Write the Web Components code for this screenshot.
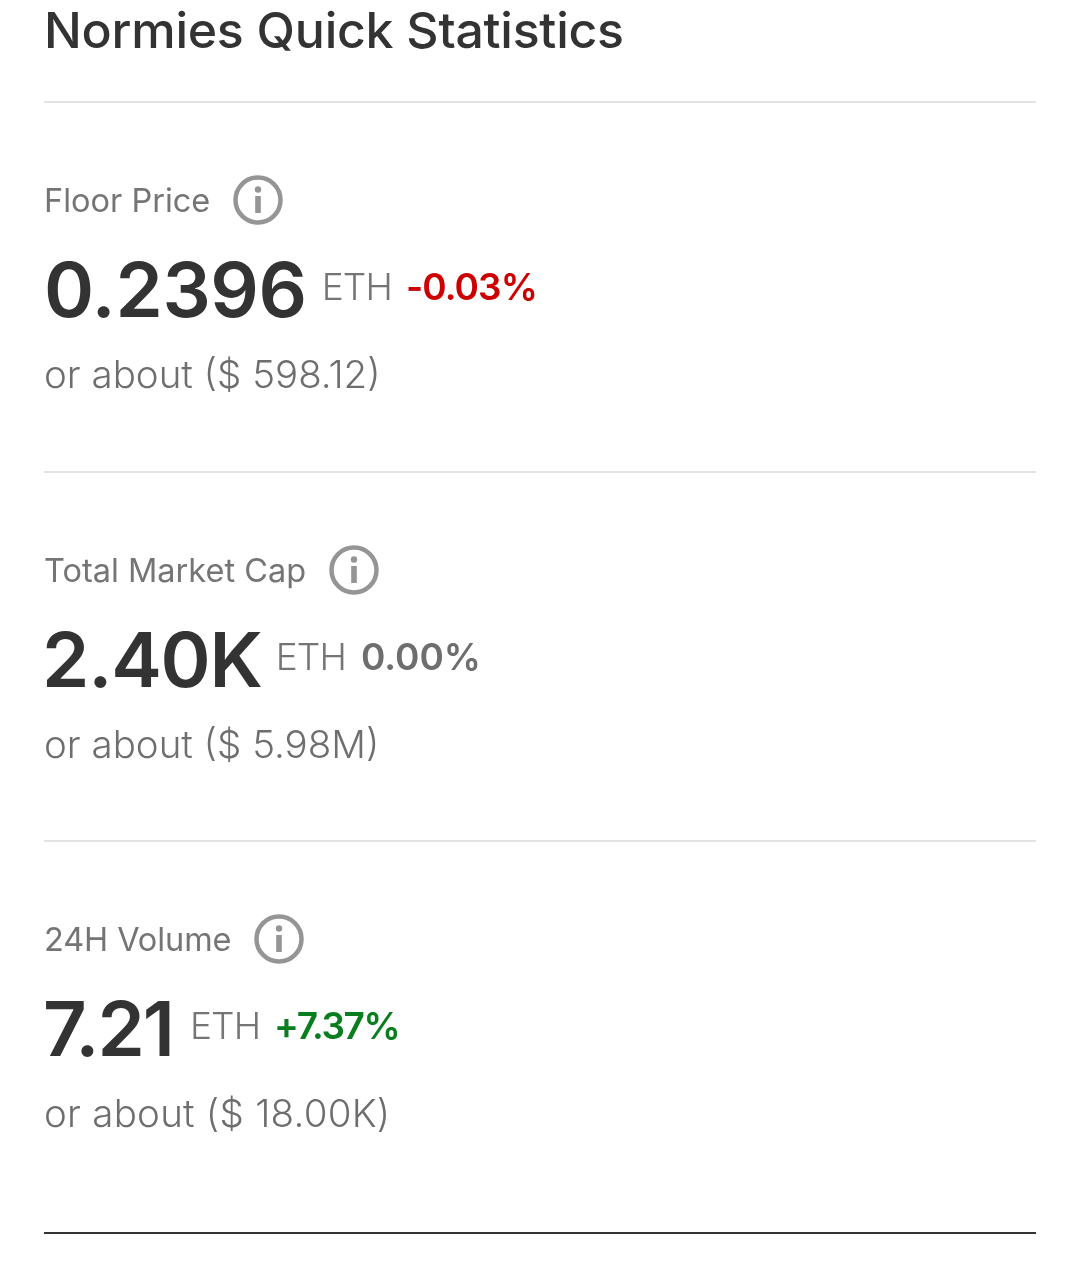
<!DOCTYPE html>
<html><head><meta charset="utf-8"><style>
html,body{margin:0;padding:0;background:#fff}
body{font-family:Inter,"Liberation Sans",sans-serif;color:#333}
</style></head><body>
<stat-panel heading="Normies Quick Statistics">
<stat-block label="Floor Price" value="0.2396" change="-0.03%" tone="down" about="or about ($ 598.12)" style="--h:370px;--vs:-.4px;--vm:0px;--um:15px;--ls:0px;--as:0px;--cs:-.9px;--cm:14px"></stat-block>
<stat-block label="Total Market Cap" value="2.40K" change="0.00%" tone="flat" about="or about ($ 5.98M)" style="--h:369px;--vs:-1.2px;--vm:-2px;--um:14px;--ls:0px;--as:0px;--cs:0px;--cm:15px"></stat-block>
<stat-block label="24H Volume" value="7.21" change="+7.37%" tone="up" about="or about ($ 18.00K)" last style="--h:392px;--vs:-2px;--vm:-1px;--um:17px;--ls:-.1px;--as:.25px;--cs:-1.4px;--cm:14px"></stat-block>
</stat-panel>
<script>
class StatPanel extends HTMLElement{
  constructor(){super();this.attachShadow({mode:'open'})}
  connectedCallback(){this.shadowRoot.innerHTML=`<style>
  :host{display:block;padding:0 44px;will-change:transform}
  h1{margin:0;font:540 50px/60px Inter,"Liberation Sans",sans-serif;letter-spacing:-.25px;color:#333;height:103px;box-sizing:border-box;border-bottom:2px solid #e3e3e3}
  </style><h1>${this.getAttribute('heading')}</h1><slot></slot>`}
}
class InfoIcon extends HTMLElement{
  constructor(){super();this.attachShadow({mode:'open'}).innerHTML=`<style>
  :host{display:block;width:50px;height:50px}
  svg{display:block}
  </style><svg width="50" height="50" viewBox="0 0 50 50" fill="none"><circle cx="25" cy="25" r="22.5" stroke="#959595" stroke-width="4.5"/><circle cx="25" cy="14.5" r="3.2" fill="#959595"/><rect x="22.2" y="21" width="5.6" height="17" fill="#959595"/></svg>`}
}
class StatBlock extends HTMLElement{
  constructor(){super();this.attachShadow({mode:'open'})}
  connectedCallback(){
    const a=n=>this.getAttribute(n);
    const last=this.hasAttribute('last');
    const c={down:'#cc0000',flat:'#6e6e6e',up:'#0a7d1e'}[a('tone')];
    this.shadowRoot.innerHTML=`<style>
    :host{display:block;box-sizing:border-box;height:var(--h);padding-top:72px;border-bottom:2px solid ${last?'#333':'#e3e3e3'};font-family:Inter,"Liberation Sans",sans-serif}
    .label{display:flex;align-items:center;gap:23px;height:50px;font-size:32.5px;font-weight:380;color:#757575;letter-spacing:var(--ls)}
    .main{display:flex;align-items:center;margin-top:22px;height:84px;line-height:84px;margin-left:var(--vm)}
    .value{font-size:76px;font-weight:600;color:#333;letter-spacing:var(--vs)}
    .unit,.chg{font-size:37px;padding-bottom:4px}
    .unit{font-weight:320;color:#757575;margin-left:var(--um);letter-spacing:-.95px}
    .chg{font-weight:600;color:${c};margin-left:var(--cm);letter-spacing:var(--cs)}
    .about{font-size:38.5px;font-weight:320;line-height:48px;color:#6e6e6e;margin-top:19px;letter-spacing:var(--as)}
    </style><div class="label"><span>${a('label')}</span><info-icon></info-icon></div>
    <div class="main"><span class="value">${a('value')}</span><span class="unit">ETH</span><span class="chg">${a('change')}</span></div>
    <div class="about">${a('about')}</div>`;
  }
}
customElements.define('stat-panel',StatPanel);
customElements.define('info-icon',InfoIcon);
customElements.define('stat-block',StatBlock);
</script>
</body></html>
